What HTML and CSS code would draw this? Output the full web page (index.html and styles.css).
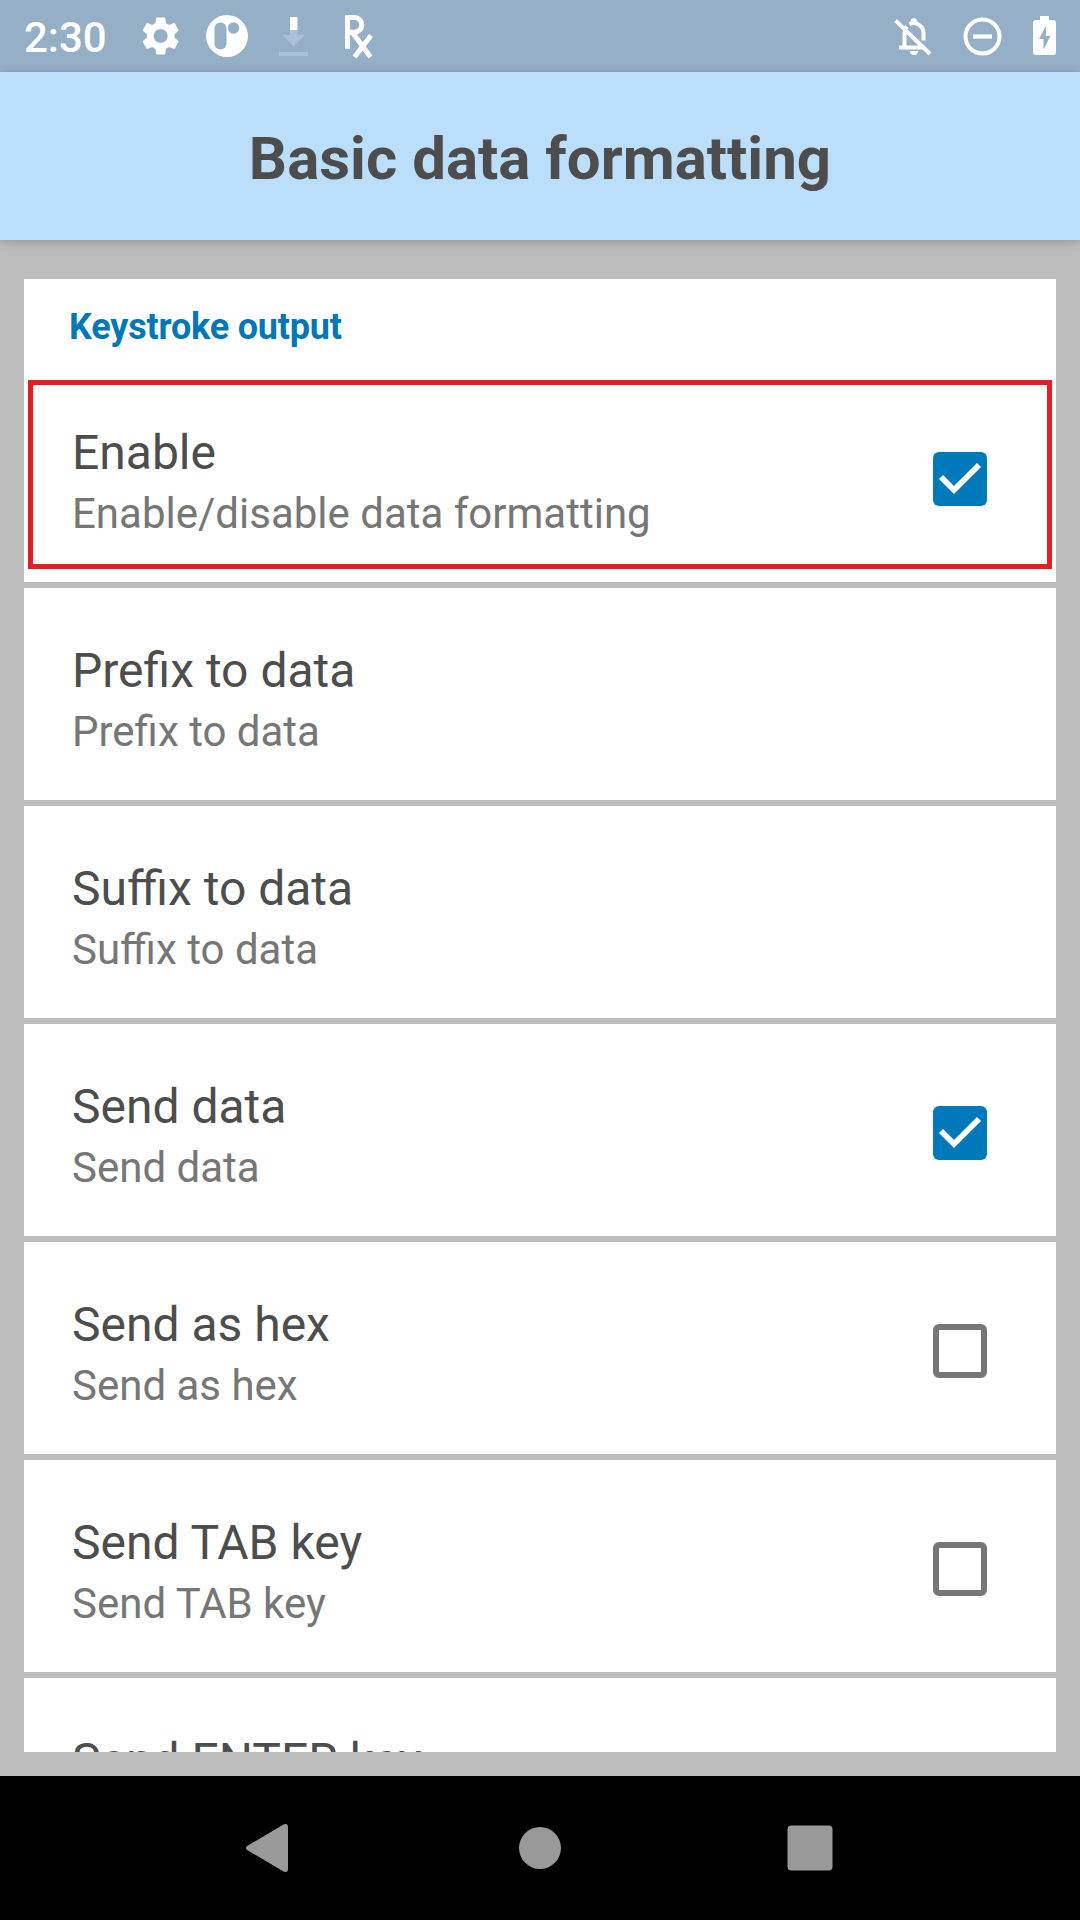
FILE: index.html
```html
<!DOCTYPE html>
<html lang="en">
<head>
<meta charset="utf-8">
<title>Basic data formatting</title>
<link rel="stylesheet" href="styles.css">
</head>
<body>
<div class="screen">
  <div class="status">
    <span class="clock">2:30</span>
    <svg class="status-left" width="244" height="72" viewBox="136 0 244 72" fill="#fff">
      <path transform="translate(137.5 12.8) scale(1.93)" d="M19.14 12.94c.04-.3.06-.61.06-.94 0-.32-.02-.64-.07-.94l2.03-1.58c.18-.14.23-.41.12-.61l-1.92-3.32c-.12-.22-.37-.29-.59-.22l-2.39.96c-.5-.38-1.03-.7-1.62-.94L14.4 2.81c-.04-.24-.24-.41-.48-.41h-3.84c-.24 0-.43.17-.47.41l-.36 2.54c-.59.24-1.13.57-1.62.94l-2.39-.96c-.22-.08-.47 0-.59.22L2.74 8.87c-.12.21-.08.47.12.61l2.03 1.58c-.05.3-.09.63-.09.94s.02.64.07.94l-2.03 1.58c-.18.14-.23.41-.12.61l1.92 3.32c.12.22.37.29.59.22l2.39-.96c.5.38 1.03.7 1.62.94l.36 2.54c.05.24.24.41.48.41h3.84c.24 0 .44-.17.47-.41l.36-2.54c.59-.24 1.13-.56 1.62-.94l2.39.96c.22.08.47 0 .59-.22l1.92-3.32c.12-.22.07-.47-.12-.61zM12 15.6c-1.98 0-3.6-1.62-3.6-3.6s1.62-3.6 3.6-3.6 3.6 1.62 3.6 3.6-1.62 3.6-3.600 3.600z"/>
      <circle cx="227" cy="36" r="21"/>
      <g fill="#95afc6"><rect x="214.5" y="22.5" width="12" height="27" rx="6"/><circle cx="233.5" cy="28" r="5.7"/></g>
      <path fill="#a9c2d9" d="M290 30h7.500v5H305L293.700 46 282.500 35h7.500zM279 52h29v4h-29z"/>
      <rect x="290" y="17" width="7.500" height="13"/>
      <g fill="none" stroke="#fff" stroke-width="5"><path d="M347.500 49V17.500H354.500a7.200 7.200 0 0 1 0 14.700H347.500M352 32L370.500 57M371 35.500L354.500 57"/></g>
    </svg>
    <svg class="status-right" width="170" height="72" viewBox="890 0 170 72" fill="none" stroke="#fff">
      <path stroke-width="4" d="M895.500 20.500L930 54M899 47.500H923M904.500 47V34c0-3 .8-5.700 2.200-7.700M909.500 24a10 10 0 0 1 14 10v6.500"/>
      <path stroke="none" fill="#fff" d="M910.500 25v-3.500a3.300 3.300 0 0 1 6.600 0V25zM910 51h8a4 4 0 0 1-8 0z"/>
      <circle cx="982.500" cy="36.500" r="17" stroke-width="4"/><path stroke-width="4.200" d="M973 36.500h19"/>
      <path stroke="none" fill="#fff" fill-rule="evenodd" d="M1040 16h9v4h4q3 0 3 3v29q0 3-3 3h-17q-3 0-3-3V23q0-3 3-3h4zM1046 26l-7 13h4.500v10.500L1050.500 36h-4.500z"/>
    </svg>
  </div>
  <header class="header"><h1>Basic data formatting</h1></header>
  <main class="content">
    <section class="list">
      <h2 class="category">Keystroke output</h2>
      <div class="row first focus"><div><p class="title">Enable</p><p class="summary">Enable/disable data formatting</p></div><svg class="check" viewBox="0 0 54 54"><rect width="54" height="54" rx="6" fill="#0079ba"/><path d="M8 25L21 38L46 13" fill="none" stroke="#fff" stroke-width="5.800"/></svg></div>
      <div class="row"><div><p class="title">Prefix to data</p><p class="summary">Prefix to data</p></div></div>
      <div class="row"><div><p class="title">Suffix to data</p><p class="summary">Suffix to data</p></div></div>
      <div class="row"><div><p class="title">Send data</p><p class="summary">Send data</p></div><svg class="check" viewBox="0 0 54 54"><rect width="54" height="54" rx="6" fill="#0079ba"/><path d="M8 25L21 38L46 13" fill="none" stroke="#fff" stroke-width="5.800"/></svg></div>
      <div class="row"><div><p class="title">Send as hex</p><p class="summary">Send as hex</p></div><span class="check empty"></span></div>
      <div class="row"><div><p class="title">Send TAB key</p><p class="summary">Send TAB key</p></div><span class="check empty"></span></div>
      <div class="row"><div><p class="title">Send ENTER key</p></div></div>
    </section>
  </main>
  <nav class="nav">
    <svg width="1080" height="144" viewBox="0 0 1080 144" fill="#999"><path d="M247 70L283.500 48.500Q288 47 288 51V93Q288 97 283.500 95.500L247 74Q245 72 247 70z"/><circle cx="540" cy="72" r="21"/><rect x="787.500" y="49.500" width="45" height="45" rx="4"/></svg>
  </nav>
</div>
</body>
</html>
```
FILE: styles.css
```css
*, *::after { box-sizing: border-box; margin: 0; }
body { font-family: Roboto, "Noto Sans", sans-serif; background: #000; color: #4d4d4d; }
.screen { width: 1080px; height: 1920px; display: flex; flex-direction: column; overflow: hidden; }
.status { height: 72px; flex: none; display: flex; background: #95afc6; color: #fff; padding-left: 24px; }
.clock { width: 112px; font-size: 42px; font-weight: 500; line-height: 76px; white-space: nowrap; }
.status-right { margin-left: auto; margin-right: 20px; }
.header { height: 168px; flex: none; background: #bbdefb; display: flex; justify-content: center; box-shadow: 0 2px 10px rgba(0, 0, 0, .22); position: relative; }
h1 { font-size: 60px; font-weight: 700; line-height: 174px; white-space: nowrap; }
.content { flex: 1; min-height: 0; background: #bdbdbd; padding: 39px 24px 24px; }
.list { height: 100%; overflow: hidden; background: #fff; }
.category { height: 91px; padding-left: 45px; font-size: 36px; font-weight: 700; line-height: 97px; letter-spacing: -0.2px; color: #0277b5; }
.row { height: 218px; border-top: 6px solid #bdbdbd; padding: 58px 69px 0 48px; display: flex; justify-content: space-between; position: relative; }
.row.first { height: 212px; border-top: 0; }
.focus::after { content: ""; position: absolute; left: 4px; right: 4px; top: 10px; height: 189px; border: 5px solid #e81e25; }
.title { font-size: 48px; line-height: 50px; margin-bottom: 12px; white-space: nowrap; }
.summary { font-size: 42px; line-height: 48px; color: #767676; white-space: nowrap; }
.check { width: 54px; height: 54px; margin-top: 24px; flex: none; }
.empty { border: 6px solid #767676; border-radius: 6px; }
.nav { height: 144px; flex: none; background: #000; }
.nav svg { display: block; }
```
